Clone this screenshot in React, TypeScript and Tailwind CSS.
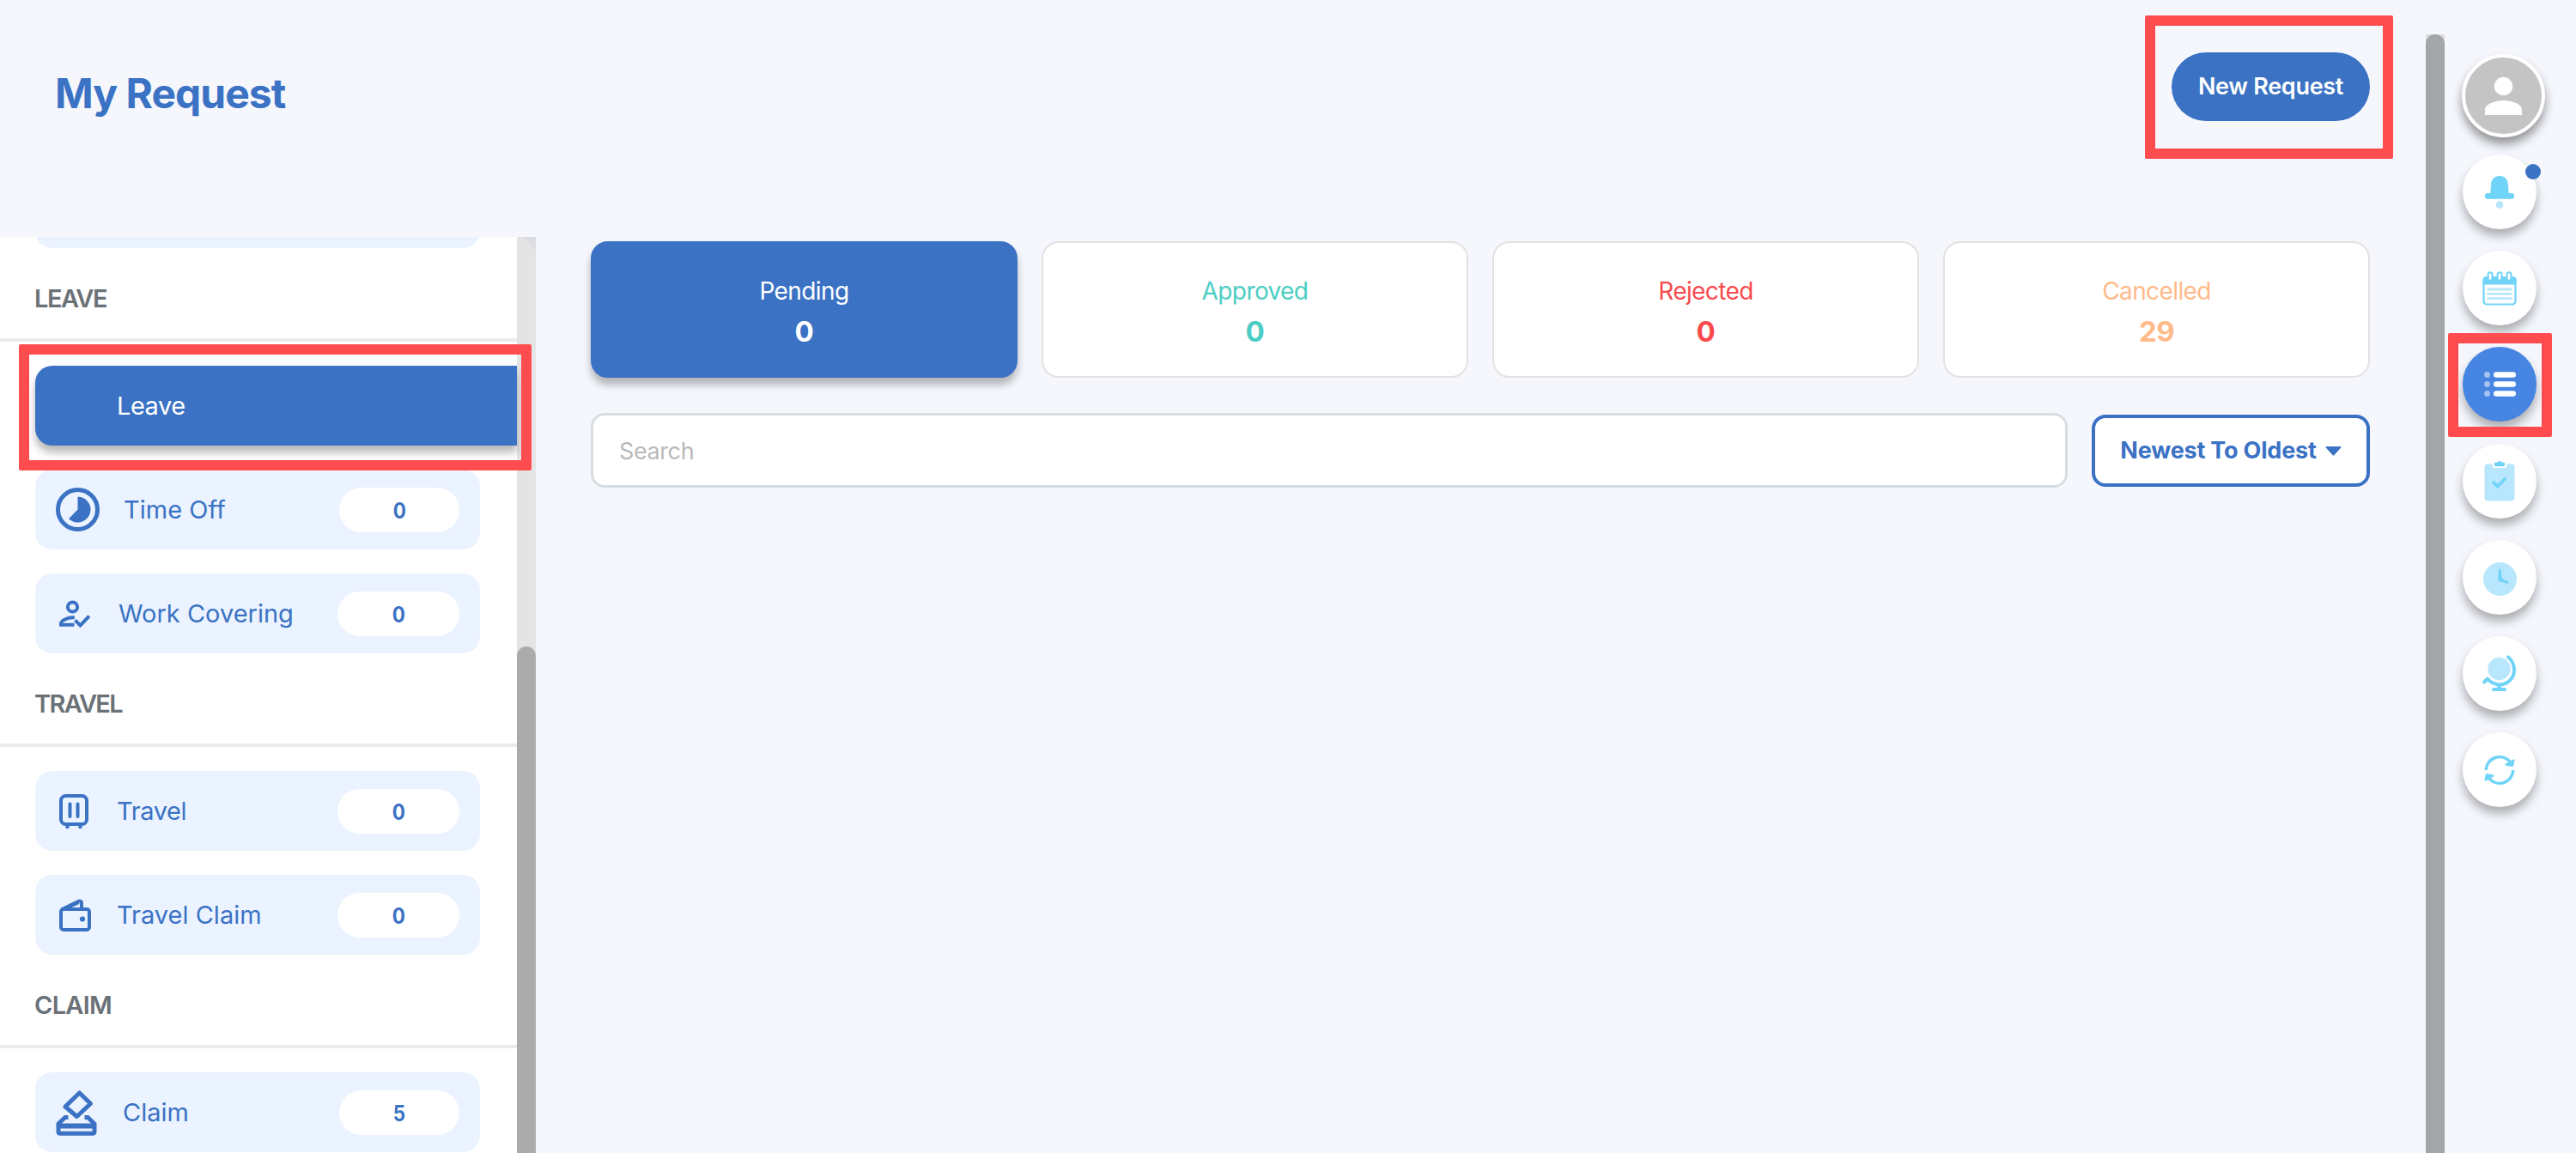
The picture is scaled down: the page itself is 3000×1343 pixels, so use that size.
import type { ReactNode } from 'react';

interface MenuItem {
  label: string;
  count?: number;
  icon?: ReactNode;
  large?: boolean;
  active?: boolean;
  labelClass?: string;
}

interface MenuSection {
  title: string;
  titleClass: string;
  items: MenuItem[];
}

const TimeOffIcon = () => (
  <svg className="w-[51px] h-[51px]" viewBox="0 0 51 51" fill="none">
    <circle cx="25.5" cy="25.5" r="23" stroke="currentColor" strokeWidth="5" />
    <path d="M25.5 10.5a15 15 0 1 1-10.5 25.7L25.5 25.5z" fill="currentColor" />
  </svg>
);

const WorkCoveringIcon = () => (
  <svg className="w-9 h-8" viewBox="0 0 36 32" fill="none" stroke="currentColor" strokeWidth="4">
    <circle cx="15.5" cy="8" r="5.6" />
    <path d="M17.8 20.3C10 19.5 2 24 2 27.3v1.5h15.5" />
    <path d="M18.5 23.5l6 6L34.8 18.5" />
  </svg>
);

const TravelIcon = () => (
  <svg className="w-[34px] h-10" viewBox="0 0 34 40" fill="none" stroke="currentColor" strokeWidth="4">
    <rect x="2" y="2" width="30" height="33" rx="5.5" />
    <path d="M12.5 11.5v14.5M21.5 11.5v14.5" strokeLinecap="round" />
    <path d="M9.5 36v4M24.5 36v4" />
  </svg>
);

const WalletIcon = () => (
  <svg className="w-[37px] h-[38px]" viewBox="0 0 37 38" fill="none" stroke="currentColor" strokeWidth="4">
    <rect x="2" y="12" width="33" height="24" rx="3" />
    <path d="M2.5 12.5L22.5 2.8c2-.9 3.500 0 3.500 2V12" strokeLinejoin="round" />
    <path d="M7 12L23 5" strokeWidth="2" />
    <circle cx="27" cy="23.5" r="3.1" fill="currentColor" stroke="none" />
  </svg>
);

const ClaimIcon = () => (
  <svg className="w-12 h-[54px]" viewBox="0 0 48 54" fill="none" stroke="currentColor" strokeWidth="5">
    <path d="M27.5 4L40.5 16.5 24.5 31.5 11 20z" strokeLinejoin="round" />
    <path d="M14.5 32.5H10.8L3 40v9q0 2.200 2.200 2.200h37.600q2.200 0 2.200-2.200v-9L37.2 32.5H33.5" />
    <path d="M3 42.5h42" strokeWidth="6" />
  </svg>
);

const sections: MenuSection[] = [
  {
    title: 'LEAVE',
    titleClass: 'tracking-[-1.5px]',
    items: [
      { label: 'Leave', active: true, labelClass: 'tracking-[-0.5px]' },
      { label: 'Time Off', count: 0, icon: <TimeOffIcon />, large: true, labelClass: 'ml-px' },
      { label: 'Work Covering', count: 0, icon: <WorkCoveringIcon />, labelClass: 'ml-0.5' },
    ],
  },
  {
    title: 'TRAVEL',
    titleClass: 'tracking-[-1.7px]',
    items: [
      { label: 'Travel', count: 0, icon: <TravelIcon />, labelClass: 'tracking-[-0.4px]' },
      { label: 'Travel Claim', count: 0, icon: <WalletIcon /> },
    ],
  },
  {
    title: 'CLAIM',
    titleClass: 'tracking-[-0.7px]',
    items: [{ label: 'Claim', count: 5, icon: <ClaimIcon />, large: true }],
  },
];

const stats = [
  { label: 'Pending', value: 0, className: 'bg-[#3b72c4] border-[#3b72c4] text-white shadow-[0_8px_10px_rgba(0,0,0,0.28)]' },
  { label: 'Approved', value: 0, className: 'bg-white border-[#e2e2e2] text-[#4bcdc3]' },
  { label: 'Rejected', value: 0, className: 'bg-white border-[#e2e2e2] text-[#f94b4e]' },
  { label: 'Cancelled', value: 29, className: 'bg-white border-[#e2e2e2] text-[#ffba8a]' },
];

const BellIcon = () => (
  <svg className="w-[36px] h-[40px]" viewBox="0 0 36 40">
    <path d="M18 1C11.5 1 8 6 8 11.5L7.3 21H4.2a3.4 3.4 0 0 0 0 6.8h27.6a3.4 3.4 0 0 0 0-6.8h-3.1L28 11.5C28 6 24.5 1 18 1z" fill="#70d3f8" />
    <circle cx="18" cy="34.5" r="4.4" fill="#b8e7fd" />
  </svg>
);

const CalendarIcon = () => (
  <svg className="w-10 h-10" viewBox="0 0 40 40" fill="none">
    <rect x="1.5" y="7.5" width="37" height="31" rx="3.5" fill="#fff" stroke="#70d3f8" strokeWidth="2.2" />
    <path d="M.5 15.5V10q0-4 4-4h31q4 0 4 4v5.5z" fill="#70d3f8" />
    <path d="M6.5 21h27M6.5 26.3h27M6.5 31.6h27" stroke="#b8e7fd" strokeWidth="2.8" strokeLinecap="round" />
    {[9, 20, 31].map((x) => (
      <rect key={x} x={x - 2.4} y="1.3" width="4.8" height="9.5" rx="2.4" fill="#fff" stroke="#70d3f8" strokeWidth="2" />
    ))}
  </svg>
);

const ListIcon = () => (
  <svg className="w-[38px] h-[30px]" viewBox="0 0 38 30">
    {[3.5, 14.5, 25.5].map((y) => (
      <g key={y}>
        <circle cx="4.5" cy={y} r="3.4" fill="#a6c3f2" />
        <rect x="12" y={y - 3.3} width="26" height="6.6" rx="3.3" fill="#fff" />
      </g>
    ))}
  </svg>
);

const ClipboardIcon = () => (
  <svg className="w-9 h-12" viewBox="0 0 36 48" fill="none">
    <rect x=".5" y="4.5" width="35" height="43" rx="4" fill="#b8e7fd" />
    <path d="M9.5 3h17v3a3 3 0 0 1-3 3h-11a3 3 0 0 1-3-3z" fill="#fff" />
    <path d="M14 2.5h1.7a2.6 2.6 0 0 1 4.6 0H22a2.3 2.3 0 0 1 0 4.8h-8a2.3 2.3 0 0 1 0-4.8z" fill="#70d3f8" />
    <path d="M11 26l4.800 4.600L24 22" stroke="#70d3f8" strokeWidth="3.6" strokeLinecap="round" strokeLinejoin="round" />
  </svg>
);

const ClockIcon = () => (
  <svg className="mt-1 w-[39px] h-[39px]" viewBox="0 0 39 39">
    <circle cx="19.5" cy="19.5" r="19.5" fill="#b8e7fd" />
    <path d="M19.3 7.5c.8 0 1.3.6 1.4 1.4l1 10 7 3.200c1.600.8 1 3-.8 2.700l-9.300-2.600c-1-.3-1.400-.9-1.300-1.900l.6-11.400c0-.8.6-1.400 1.400-1.400z" fill="#70d3f8" />
  </svg>
);

const GlobeIcon = () => (
  <svg className="w-10 h-[42px]" viewBox="0 0 40 42" fill="none">
    <circle cx="19.5" cy="16" r="13.2" fill="#b8e7fd" />
    <path d="M30 2.3c9.5 8.5 9 22 .5 28.5-7.5 5.8-18 4.5-24.500-3.300L2.2 31.5" stroke="#70d3f8" strokeWidth="4" strokeLinecap="round" strokeLinejoin="round" />
    <path d="M17.3 34h4.400v4h3.800q2.500 0 2.500 4H11q0-4 2.500-4h3.800z" fill="#70d3f8" />
  </svg>
);

const RefreshIcon = () => (
  <svg className="w-9 h-9" viewBox="0 0 36 36" fill="none">
    <path d="M2.3 18A15.7 15.7 0 0 1 31 9.5M33.7 18A15.7 15.7 0 0 1 5 26.5" stroke="#70d3f8" strokeWidth="3.4" />
    <path d="M34.8 6L33.5 13q-4 .5-8.500-1.500zM1.2 30L2.5 23q4-.5 8.500 1.500z" fill="#70d3f8" stroke="#70d3f8" strokeWidth="1.5" strokeLinejoin="round" />
  </svg>
);

const tools = [
  { name: 'notifications', icon: <BellIcon />, dot: true },
  { name: 'calendar', icon: <CalendarIcon /> },
  { name: 'requests', icon: <ListIcon />, active: true },
  { name: 'tasks', icon: <ClipboardIcon /> },
  { name: 'attendance', icon: <ClockIcon /> },
  { name: 'travel', icon: <GlobeIcon /> },
  { name: 'sync', icon: <RefreshIcon /> },
];

function Highlight({ className }: { className: string }) {
  return <div className={`absolute z-10 border-12 border-[#ff4d4f] rounded-xs pointer-events-none ${className}`} />;
}

function SidebarItem({ item }: { item: MenuItem }) {
  if (item.active) {
    return (
      <div className="relative ml-[41px] h-[93px] shrink-0">
        <div className="h-full rounded-l-[20px] bg-[#3b72c4] pl-[95px] flex items-center text-white shadow-[0_8px_10px_rgba(0,0,0,0.28)]">
          <span className={item.labelClass}>{item.label}</span>
        </div>
        <Highlight className="-left-[19px] -top-[25px] w-[597px] h-[147px]" />
      </div>
    );
  }

  return (
    <div className="ml-[41px] w-[518px] h-[93px] shrink-0 rounded-[20px] bg-[#eaf3ff] text-[#3b72c4] flex items-center pr-6">
      <div className={item.large ? 'w-[102px] pl-6' : 'w-[95px] pl-7'}>{item.icon}</div>
      <span className={item.labelClass}>{item.label}</span>
      <div
        className={`ml-auto h-[52px] rounded-[26px] bg-white flex items-center justify-center pt-1 text-[25px] font-bold ${
          item.large ? 'w-[140px]' : 'w-[142px]'
        }`}
      >
        <span className="scale-x-90">{item.count}</span>
      </div>
    </div>
  );
}

function Sidebar() {
  return (
    <aside className="flex w-[624px] h-[1067px] shrink-0 text-[29px]">
      <div className="w-[602px] bg-white flex flex-col">
        <div className="ml-[41px] w-[518px] h-[13px] shrink-0 overflow-hidden flex items-end">
          <div className="h-[93px] w-full shrink-0 rounded-[20px] bg-[#eaf3ff]" />
        </div>
        {sections.map((section) => (
          <section key={section.title} className="flex flex-col">
            <h2 className="h-[109px] shrink-0 pl-10 pt-[37px] border-b-4 border-[#ebebeb] font-semibold text-[#6a7177] leading-[44px]">
              <span className={section.titleClass}>{section.title}</span>
            </h2>
            <div className="flex flex-col gap-7 pt-7">
              {section.items.map((item) => (
                <SidebarItem key={item.label} item={item} />
              ))}
            </div>
          </section>
        ))}
      </div>
      <div className="w-[22px] bg-[#dcdde2]">
        <div className="h-full rounded-tr-[22px] bg-[#e4e4e4] pt-[477px]">
          <div className="h-full rounded-t-full bg-[#ababab]" />
        </div>
      </div>
    </aside>
  );
}

export default function App() {
  return (
    <div className="w-[3000px] h-[1343px] overflow-hidden bg-[#f5f7fd] flex font-['Inter',sans-serif]">
      <div className="w-[2825px] flex flex-col">
        <header className="h-[276px] shrink-0 flex justify-between items-start pl-16 pr-[65px]">
          <h1 className="mt-[79px] text-[48px] leading-[60px] font-bold tracking-[-1px] text-[#3b72c4]">My Request</h1>
          <div className="relative mt-[61px]">
            <button className="w-[231px] h-20 rounded-full bg-[#3b72c4] text-white text-[27px] tracking-[-0.3px] font-semibold">
              New Request
            </button>
            <Highlight className="-left-[31px] -top-[43px] w-[289px] h-[167px]" />
          </div>
        </header>

        <div className="flex">
          <Sidebar />

          <main className="flex-1 pt-[5px] pl-16 pr-[65px]">
            <div className="grid grid-cols-4 gap-7">
              {stats.map((stat) => (
                <div
                  key={stat.label}
                  className={`h-[159px] rounded-[20px] border-2 flex flex-col items-center pt-9 ${stat.className}`}
                >
                  <span className="text-[28px] leading-[40px] tracking-[-0.6px]">{stat.label}</span>
                  <span className="mt-[5px] text-[33px] leading-[44px] font-bold tracking-[-0.5px]">{stat.value}</span>
                </div>
              ))}
            </div>

            <div className="mt-[41px] flex items-center gap-7">
              <input
                placeholder="Search"
                className="flex-1 h-[87px] rounded-2xl border-3 border-[#d7dde1] bg-white px-[30px] pt-0.5 text-[27px] tracking-[-0.4px] placeholder:text-[#b9b9b9]"
              />
              <button className="w-[324px] h-[84px] rounded-2xl border-4 border-[#3b72c4] bg-white text-[#3b72c4] text-[27px] tracking-[-0.2px] font-bold flex items-center justify-center gap-2.5 pt-0.5">
                <span className="whitespace-nowrap">Newest To Oldest</span>
                <svg className="w-[19px] h-[11px]" viewBox="0 0 19 11" fill="currentColor">
                  <path d="M1.5 0h16q1.5.3.7 1.5L10.5 10q-1 1-2 0L.8 1.5Q0 .3 1.5 0z" />
                </svg>
              </button>
            </div>
          </main>
        </div>
      </div>

      <div className="mt-10 w-[22px] bg-[#dcdde2]">
        <div className="h-full rounded-t-full bg-[#a4a5a9]" />
      </div>

      <nav className="pl-5 pt-[63px] flex flex-col">
        <div className="w-[97px] h-[97px] shrink-0 rounded-full border-4 border-white bg-[#c4c4c4] shadow-[0_8px_12px_rgba(0,0,0,0.4)] flex items-center justify-center">
          <svg className="w-[43px] h-[45px]" viewBox="0 0 43 45" fill="#fff">
            <circle cx="21.5" cy="11.5" r="10.7" />
            <path d="M0 45v-6c0-7 12-11 21.500-11S43 32 43 39v6z" />
          </svg>
        </div>
        <div className="mt-5 ml-px flex flex-col gap-[25.2px]">
          {tools.map((tool) => (
            <div
              key={tool.name}
              className={`relative w-[86px] h-[87px] rounded-full flex items-center justify-center shadow-[0_8px_12px_rgba(0,0,0,0.3)] ${
                tool.active ? 'bg-[#4785e2]' : 'bg-white'
              }`}
            >
              {tool.icon}
              {tool.dot && <span className="absolute left-[73px] top-[11px] w-[18px] h-[18px] rounded-full bg-[#3b72c4]" />}
              {tool.active && <Highlight className="-left-[17px] -top-4 w-[121px] h-[121px]" />}
            </div>
          ))}
        </div>
      </nav>
    </div>
  );
}
